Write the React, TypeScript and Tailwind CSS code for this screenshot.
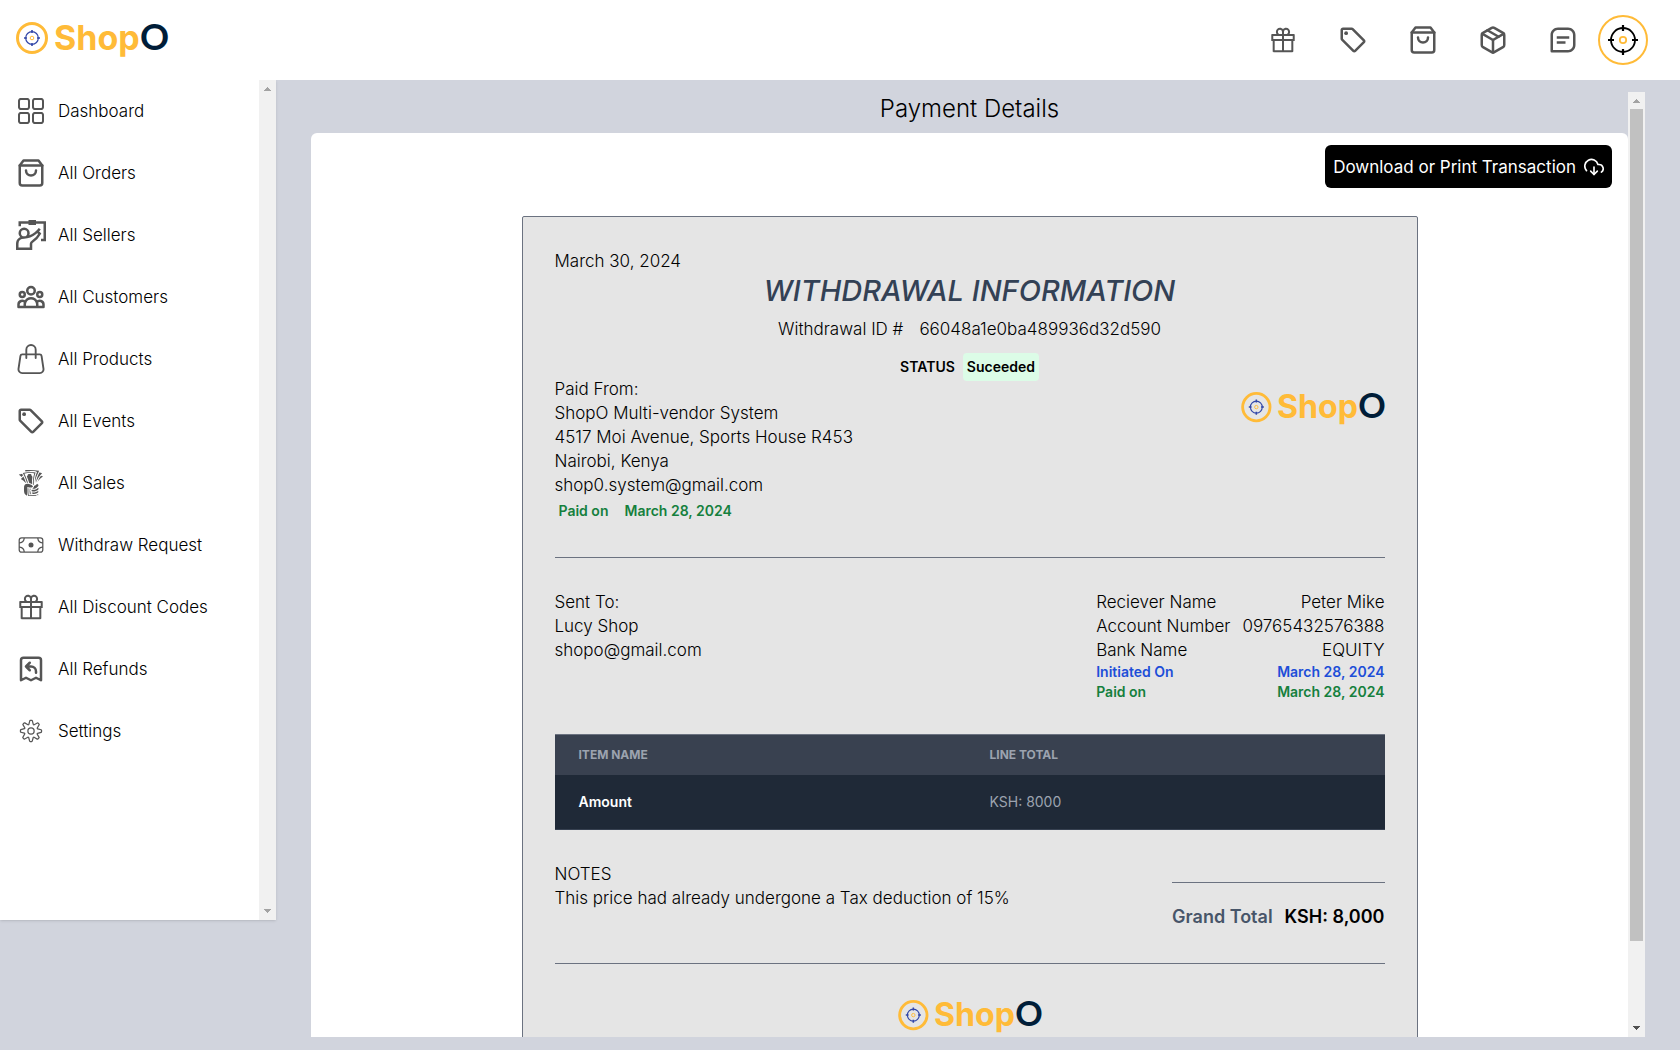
import React from 'react';
import { RxDashboard } from 'react-icons/rx';
import { FiShoppingBag, FiPackage, FiDownloadCloud } from 'react-icons/fi';
import { GrWorkshop } from 'react-icons/gr';
import { HiOutlineUserGroup, HiOutlineReceiptRefund } from 'react-icons/hi';
import { BsHandbag } from 'react-icons/bs';
import { MdOutlineLocalOffer } from 'react-icons/md';
import { GiTakeMyMoney } from 'react-icons/gi';
import { CiMoneyBill, CiSettings } from 'react-icons/ci';
import { AiOutlineGift } from 'react-icons/ai';
import { BiMessageSquareDetail } from 'react-icons/bi';

const navItems = [
  { label: 'Dashboard', Icon: RxDashboard },
  { label: 'All Orders', Icon: FiShoppingBag },
  { label: 'All Sellers', Icon: GrWorkshop },
  { label: 'All Customers', Icon: HiOutlineUserGroup },
  { label: 'All Products', Icon: BsHandbag },
  { label: 'All Events', Icon: MdOutlineLocalOffer },
  { label: 'All Sales', Icon: GiTakeMyMoney },
  { label: 'Withdraw Request', Icon: CiMoneyBill },
  { label: 'All Discount Codes', Icon: AiOutlineGift },
  { label: 'All Refunds', Icon: HiOutlineReceiptRefund },
  { label: 'Settings', Icon: CiSettings },
];

const headerLinks = [
  { label: 'Discount codes', Icon: AiOutlineGift },
  { label: 'Events', Icon: MdOutlineLocalOffer },
  { label: 'Products', Icon: FiShoppingBag },
  { label: 'Orders', Icon: FiPackage },
  { label: 'Messages', Icon: BiMessageSquareDetail },
];

const sender = [
  'Paid From:',
  'ShopO Multi-vendor System',
  '4517 Moi Avenue, Sports House R453',
  'Nairobi, Kenya',
  'shop0.system@gmail.com',
];

const receiver = [
  { label: 'Reciever Name', value: 'Peter Mike' },
  { label: 'Account Number', value: '09765432576388' },
  { label: 'Bank Name', value: 'EQUITY' },
];

function Logo({ className }: { className: string }) {
  return (
    <svg viewBox="0 0 152 36" className={className} overflow="visible" role="img" aria-label="ShopO">
      <circle cx="16" cy="16" r="14.5" fill="none" stroke="#ffbb38" strokeWidth="3" />
      <g fill="none" stroke="#3247a8">
        <circle cx="16" cy="16" r="6.3" strokeWidth="1.2" />
        <path d="M16 8v3M16 21v3M8 16h3M21 16h3" strokeWidth="1.6" />
      </g>
      <circle cx="16" cy="16" r="1.8" fill="none" stroke="#ffbb38" strokeWidth="1" />
      <text x="38" y="28" fontFamily="Inter, sans-serif" fontWeight="700" fontSize="34" fill="#ffbb38">
        Shop
      </text>
      <text x="124" y="28" fontFamily="Lato, sans-serif" fontWeight="700" fontSize="36" fill="#001d38">
        O
      </text>
    </svg>
  );
}

function Avatar() {
  return (
    <svg viewBox="0 0 50 50" className="size-[50px]" aria-hidden="true">
      <circle cx="25" cy="25" r="24" fill="#fff" stroke="#ffbb38" strokeWidth="2" />
      <circle cx="25" cy="25" r="12" fill="none" stroke="#000" strokeWidth="1.8" />
      <path d="M25 10v6M25 34v6M10 25h6M34 25h6" stroke="#000" strokeWidth="2.2" />
      <circle cx="25" cy="25" r="3.2" fill="none" stroke="#ffbb38" strokeWidth="1.8" />
    </svg>
  );
}

function ScrollArrow({ down = false, dark = false }: { down?: boolean; dark?: boolean }) {
  return (
    <svg viewBox="0 0 17 17" className="size-[17px] shrink-0" aria-hidden="true" shapeRendering="crispEdges">
      <path d={down ? 'M5 6h7l-3.500 4z' : 'M5 11h7l-3.500-4z'} fill={dark ? '#505050' : '#a3a3a3'} />
    </svg>
  );
}

export default function App() {
  return (
    <div className="flex h-screen flex-col overflow-hidden bg-[#d1d4dd] font-[Inter,sans-serif] text-[17px] leading-6 font-light text-black">
      <header className="relative z-10 flex h-20 shrink-0 items-center justify-between bg-white pr-8 pl-4">
        <a href="#home">
          <Logo className="h-9 w-[152px]" />
        </a>
        <nav className="flex items-center gap-5" aria-label="Shortcuts">
          <div className="flex gap-10">
            {headerLinks.map(({ label, Icon }) => (
              <a key={label} href="#shortcut" aria-label={label}>
                <Icon size={30} color="#555" />
              </a>
            ))}
          </div>
          <a href="#profile" aria-label="Profile">
            <Avatar />
          </a>
        </nav>
      </header>

      <div className="flex min-h-0 flex-1 items-start">
        <aside className="flex h-[80vh] w-[276px] shrink-0 bg-white shadow-sm">
          <nav className="flex-1" aria-label="Main">
            {navItems.map(({ label, Icon }) => (
              <a key={label} href="#page" className="flex items-center gap-3 p-4">
                <Icon size={30} color="#555" className="shrink-0" />
                <span>{label}</span>
              </a>
            ))}
          </nav>
          <div className="flex w-[17px] flex-col justify-between bg-[#f1f1f1]">
            <ScrollArrow />
            <ScrollArrow down />
          </div>
        </aside>

        <main className="mx-[35px] mt-3 flex h-[90vh] min-w-0 flex-1">
          <div className="min-w-0 flex-1 overflow-hidden">
            <h1 className="pb-2 text-center text-[24px] leading-[33px]">Payment Details</h1>
            <section className="flex flex-col rounded-t-md bg-white pt-3 pb-12">
              <button
                type="button"
                className="mr-4 flex h-[43px] items-center gap-2 self-end rounded-md bg-black px-2 text-[17px] font-normal text-white"
              >
                Download or Print Transaction
                <FiDownloadCloud size={20} />
              </button>

              <article className="mx-auto mt-7 w-full max-w-4xl rounded-xs border border-[#6b7280] bg-[#e5e5e5] p-8">
                <p>March 30, 2024</p>
                <div className="flex flex-col items-center">
                  <h2 className="text-[29px] leading-9 font-medium text-[#334155] italic">WITHDRAWAL INFORMATION</h2>
                  <p className="mt-2 flex gap-4">
                    <span>Withdrawal ID #</span>
                    <span>66048a1e0ba489936d32d590</span>
                  </p>
                  <p className="mt-4 flex h-5 items-center gap-2 text-[14px] font-semibold">
                    STATUS
                    <span className="rounded-sm bg-[#dcfce7] p-1 leading-5">Suceeded</span>
                  </p>
                </div>

                <div className="flex items-start justify-between">
                  <div>
                    {sender.map((line) => (
                      <p key={line}>{line}</p>
                    ))}
                    <p className="mt-1 mb-9 flex gap-4 px-1 text-[14px] leading-5 font-semibold text-[#15803d]">
                      <span>Paid on</span>
                      <span>March 28, 2024</span>
                    </p>
                  </div>
                  <Logo className="mt-[15px] h-[34px] w-[144px]" />
                </div>

                <hr className="mb-8 border-[#6b7280]" />

                <div className="flex items-start justify-between">
                  <div>
                    <p>Sent To:</p>
                    <p>Lucy Shop</p>
                    <p>shopo@gmail.com</p>
                  </div>
                  <dl>
                    {receiver.map(({ label, value }) => (
                      <div key={label} className="flex justify-between gap-3">
                        <dt>{label}</dt>
                        <dd>{value}</dd>
                      </div>
                    ))}
                    <div className="flex justify-between text-[14px] leading-5 font-semibold text-[#1d4ed8]">
                      <dt>Initiated On</dt>
                      <dd>March 28, 2024</dd>
                    </div>
                    <div className="flex justify-between text-[14px] leading-5 font-semibold text-[#15803d]">
                      <dt>Paid on</dt>
                      <dd>March 28, 2024</dd>
                    </div>
                  </dl>
                </div>

                <table className="mt-8 w-full table-fixed border-collapse border-t border-b border-t-[#6b7280] border-b-[#374151] text-left text-[14px]">
                  <thead className="bg-[#394150] text-[12px] text-[#9ca3af]">
                    <tr>
                      <th scope="col" className="h-10 w-[411px] px-6 font-bold">ITEM NAME</th>
                      <th scope="col" className="h-10 px-6 font-bold">LINE TOTAL</th>
                    </tr>
                  </thead>
                  <tbody className="bg-[#1f2937]">
                    <tr>
                      <th scope="row" className="h-[55px] px-6 font-semibold text-white">Amount</th>
                      <td className="px-6 font-normal text-[#9ca3af]">KSH: 8000</td>
                    </tr>
                  </tbody>
                </table>

                <div className="mt-8 flex items-start justify-between">
                  <div>
                    <p>NOTES</p>
                    <p>This price had already undergone a Tax deduction of 15%</p>
                  </div>
                  <p className="mt-5 flex gap-3 border-t border-[#6b7280] pt-5 text-[18px] leading-7 font-semibold">
                    <span className="text-[#475569]">Grand Total</span>
                    <span>KSH: 8,000</span>
                  </p>
                </div>

                <hr className="mt-8 mb-9 border-[#6b7280]" />
                <Logo className="mx-auto h-[34px] w-[144px]" />
              </article>
            </section>
          </div>

          <div className="flex w-[17px] shrink-0 flex-col bg-[#f1f1f1]">
            <ScrollArrow />
            <div className="mx-[2px] h-[88%] bg-[#c1c1c1]" />
            <div className="mt-auto">
              <ScrollArrow down dark />
            </div>
          </div>
        </main>
      </div>
    </div>
  );
}
